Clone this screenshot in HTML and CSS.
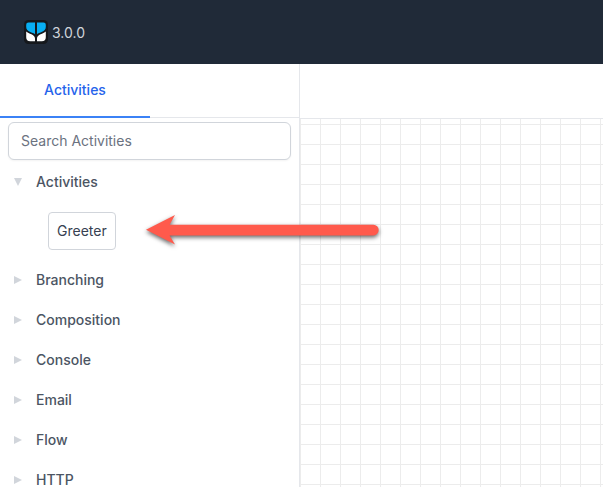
FILE: index.html
```html
<!DOCTYPE html>
<html lang="en">
<head>
<meta charset="utf-8">
<title>Workflow Designer</title>
<link rel="stylesheet" href="styles.css">
</head>
<body>
<header class="topbar">
  <svg class="logo" viewBox="0 0 24 24" aria-hidden="true">
    <rect width="24" height="24" rx="4.5" fill="#15181c"/>
    <path d="M4.5 2.5H11V14.2C9 12.4 2.2 12 2.2 7V4.8A2.3 2.3 0 0 1 4.5 2.5Z" fill="#08aef2"/>
    <path d="M19.5 2.5H13V14.2C15 12.4 21.8 12 21.8 7V4.8A2.3 2.3 0 0 0 19.5 2.5Z" fill="#08aef2"/>
    <path d="M2.2 11.5C4.5 14 11 14 11 18.6V21.3H6.2A4 4 0 0 1 2.2 17.3Z" fill="#fff"/>
    <path d="M21.8 11.5C19.5 14 13 14 13 18.6V21.3H17.8A4 4 0 0 0 21.8 17.3Z" fill="#fff"/>
  </svg>
  <span class="version">3.0.0</span>
</header>
<div class="workspace">
  <aside class="sidebar">
    <nav class="tabs"><a class="tab">Activities</a></nav>
    <div class="search"><input class="search-input" type="text" placeholder="Search Activities"></div>
    <div class="group"><svg class="caret" viewBox="0 0 8 8"><path d="M0 0H8L4 8Z"/></svg>Activities</div>
    <div class="group-items"><div class="activity">Greeter</div></div>
    <div class="group"><svg class="caret" viewBox="0 0 8 8"><path d="M0 0L8 4L0 8Z"/></svg>Branching</div>
    <div class="group"><svg class="caret" viewBox="0 0 8 8"><path d="M0 0L8 4L0 8Z"/></svg>Composition</div>
    <div class="group"><svg class="caret" viewBox="0 0 8 8"><path d="M0 0L8 4L0 8Z"/></svg>Console</div>
    <div class="group"><svg class="caret" viewBox="0 0 8 8"><path d="M0 0L8 4L0 8Z"/></svg>Email</div>
    <div class="group"><svg class="caret" viewBox="0 0 8 8"><path d="M0 0L8 4L0 8Z"/></svg>Flow</div>
    <div class="group"><svg class="caret" viewBox="0 0 8 8"><path d="M0 0L8 4L0 8Z"/></svg>HTTP</div>
  </aside>
  <main class="designer">
    <div class="toolbar"></div>
    <div class="canvas"></div>
  </main>
</div>
<svg class="arrow" viewBox="0 0 250 50" aria-hidden="true">
  <path d="M6 19.8L35 5L29.6 14.8H233.4A5.3 5.3 0 0 1 233.4 25.4H29.6L35 34.5Z"/>
</svg>
</body>
</html>
```

FILE: styles.css
```css
* {
  box-sizing: border-box;
}

body {
  margin: 0;
  height: 487px;
  overflow: hidden;
  display: flex;
  flex-direction: column;
  background: #fff;
  font: 14px/20px Inter, sans-serif;
  color: #374151;
}

.topbar {
  flex: 0 0 64px;
  display: flex;
  align-items: center;
  gap: 4px;
  padding: 2px 24px 0;
  background: #202a38;
}

.logo {
  width: 24px;
  height: 24px;
  margin-top: -2px;
}

.version {
  color: #d1d5db;
}

.workspace {
  flex: 1;
  min-height: 0;
  display: flex;
}

.sidebar {
  flex: 0 0 300px;
  border-right: 1px solid #e5e7eb;
  overflow: hidden;
}

.tabs {
  display: flex;
  height: 54px;
  border-bottom: 1px solid #e5e7eb;
}

.tab {
  width: 150px;
  height: 54px;
  padding-top: 16px;
  border-bottom: 2px solid #3b82f6;
  color: #2563eb;
  font-weight: 500;
  text-align: center;
}

.search {
  display: flex;
  padding: 4px 8px 2px;
}

.search-input {
  width: 100%;
  height: 38px;
  padding: 7px 12px 9px;
  border: 1px solid #d1d5db;
  border-radius: 6px;
  box-shadow: 0 1px 2px rgba(0, 0, 0, 0.05);
  font: inherit;
}

.search-input::placeholder {
  color: #6b7280;
  opacity: 1;
}

.group {
  display: flex;
  align-items: center;
  gap: 14px;
  height: 40px;
  padding-left: 14px;
  color: #4b5563;
  font-weight: 500;
}

.caret {
  width: 8px;
  height: 8px;
  fill: #d1d5db;
}

.group-items {
  display: flex;
  height: 58px;
  padding: 10px 0 10px 48px;
}

.activity {
  height: 38px;
  padding: 8px;
  border: 1px solid #d1d5db;
  border-radius: 4px;
}

.designer {
  flex: 1;
  display: flex;
  flex-direction: column;
}

.toolbar {
  height: 55px;
  border-bottom: 1px solid #e5e7eb;
}

.canvas {
  flex: 1;
  background-image:
    linear-gradient(to right, #ececec 1px, transparent 1px),
    linear-gradient(to bottom, #ececec 1px, transparent 1px);
  background-size: 20px 20px;
  background-position: 0 5px;
}

.arrow {
  position: absolute;
  left: 140px;
  top: 210px;
  width: 250px;
  height: 50px;
  fill: #ff5a4c;
  filter: drop-shadow(0 2.5px 2px rgba(0, 0, 0, 0.6));
}
```
